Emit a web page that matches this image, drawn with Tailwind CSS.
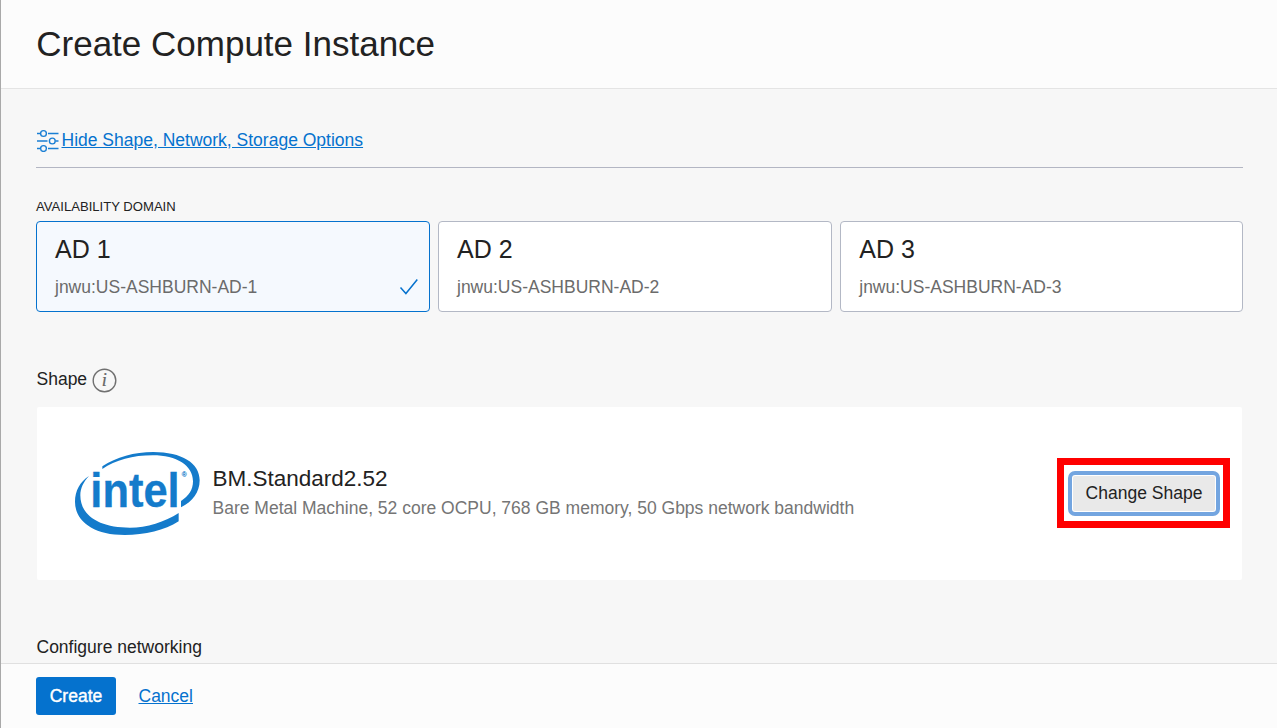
<!DOCTYPE html>
<html lang="en">
<head>
<meta charset="utf-8">
<title>Create Compute Instance</title>
<script src="https://cdn.jsdelivr.net/npm/@tailwindcss/browser@4"></script>
</head>
<body class="h-[728px] w-[1277px] overflow-hidden bg-[#f7f7f7] font-['Liberation_Sans',Arial,sans-serif] text-[17.5px] leading-6 text-[#222]">
<div class="flex h-full flex-col border-l border-[#a9a9a9]">
  <header class="flex h-[89px] shrink-0 items-center border-b border-[#e4e4e4] bg-[#fcfcfc] pl-[35.25px]">
    <h1 class="text-[35px] leading-10">Create Compute Instance</h1>
  </header>

  <main class="min-h-0 flex-1 overflow-hidden pt-[39px] pr-[34px] pl-[35px]">
    <div class="flex h-10 items-start border-b border-[#b3b6c3]">
      <a href="#" class="flex text-[#0572ce]">
        <svg class="mr-[1.5px] h-6 w-6 shrink-0" viewBox="0 0 24 24" fill="none" stroke="#1a7fd4" stroke-width="1.4">
          <path d="M1 5.500h3.700M12 5.500h10.500M1 13h10.500M19.500 13h3M1 20.500h3.700M12 20.500h10.500"/>
          <circle cx="7.500" cy="5.500" r="2.900"/><circle cx="16.300" cy="13" r="2.900"/><circle cx="7.500" cy="20.500" r="2.900"/>
        </svg>
        <span class="underline">Hide Shape, Network, Storage Options</span>
      </a>
    </div>

    <div class="mt-[29px] h-6 text-[13.1px] leading-[20px]">AVAILABILITY DOMAIN</div>
    <div class="grid h-[91px] grid-cols-[394px_394px_403px] gap-2">
      <div class="flex justify-between rounded-[4px] border border-[#0572ce] bg-[#f5f9fe] pt-[11px] pl-[18px]">
        <div>
          <div class="text-[25px] leading-8">AD 1</div>
          <div class="mt-[10px] text-[#6b6b6b]">jnwu:US-ASHBURN-AD-1</div>
        </div>
        <svg class="mt-[45px] mr-[10px] h-[18px] w-5" viewBox="0 0 20 18" fill="none" stroke="#0572ce" stroke-width="1.5"><path d="M1.500 9.500l5.400 6L18.300 1.500"/></svg>
      </div>
      <div class="rounded-[4px] border border-[#b3b8c5] bg-white pt-[11px] pl-[18px]">
        <div class="text-[25px] leading-8">AD 2</div>
        <div class="mt-[10px] text-[#6b6b6b]">jnwu:US-ASHBURN-AD-2</div>
      </div>
      <div class="rounded-[4px] border border-[#b3b8c5] bg-white pt-[11px] pl-[18.25px]">
        <div class="text-[25px] leading-8">AD 3</div>
        <div class="mt-[10px] text-[#6b6b6b]">jnwu:US-ASHBURN-AD-3</div>
      </div>
    </div>

    <div class="mt-[55px] flex h-10 items-start pl-[0.5px]">
      <span>Shape</span>
      <svg class="mt-px ml-[4.5px] h-[25px] w-[25px]" viewBox="0 0 25 25">
        <circle cx="12.500" cy="12.500" r="11.300" fill="none" stroke="#707070" stroke-width="1.400"/>
        <text x="9.700" y="17.500" font-family="Liberation Serif" font-style="italic" font-weight="400" font-size="18.500" fill="#666" stroke="#666" stroke-width="0.200">i</text>
      </svg>
    </div>

    <section class="mx-px flex h-[173px] items-center rounded-[2px] bg-white pr-3 pb-[2px] pl-[36px]">
      <svg class="h-[86px] w-[129px] shrink-0" viewBox="39 30 387 258" fill="#147bcb">
        <path d="M127 79C169 51 223 36 280 36C365 36 419 69 419 121C419 157 397 186 363 202V183C386 169 399 149 399 124C399 76 350 46 278 46C219 46 166 60 127 87Z"/>
        <path d="M87 108C70 126 61 145 61 166C61 229 121 263 210 263C260 263 315 246 356 219V244C314 271 255 285 194 285C99 285 45 243 45 185C45 153 60 125 87 108Z"/>
        <text x="91" y="202" font-family="Liberation Sans" font-weight="700" font-size="144" textLength="268" lengthAdjust="spacingAndGlyphs" stroke="#147bcb" stroke-width="1">intel</text>
        <text x="365" y="110" font-family="Liberation Sans" font-size="20" stroke="#147bcb" stroke-width="0.500">®</text>
      </svg>
      <div class="-mt-[2px] ml-[10.5px] flex-1">
        <div class="text-[22.5px] leading-[30px]">BM.Standard2.52</div>
        <div class="mt-[2px] text-[#757575]">Bare Metal Machine, 52 core OCPU, 768 GB memory, 50 Gbps network bandwidth</div>
      </div>
      <div class="flex h-[70px] w-[173px] items-center justify-center border-7 border-[#f00]">
        <button class="mt-px h-[45px] w-[152px] rounded-[7px] border-4 border-[#73a5e0] bg-[#e9e9e9] pl-px text-[#222] shadow-[inset_0_0_0_1px_#fff]">Change Shape</button>
      </div>
    </section>

    <div class="mt-[55px] pl-[0.5px]">Configure networking</div>
  </main>

  <footer class="flex h-[65px] shrink-0 items-start border-t border-[#e0e0e0] bg-[#fcfcfc] pt-[13px] pl-[35px]">
    <button class="h-[38px] w-20 rounded-[3px] bg-[#0572ce] text-white [-webkit-text-stroke:0.4px_white]">Create</button>
    <a href="#" class="mt-[7px] ml-[22.5px] text-[#0572ce] underline">Cancel</a>
  </footer>
</div>
</body>
</html>
